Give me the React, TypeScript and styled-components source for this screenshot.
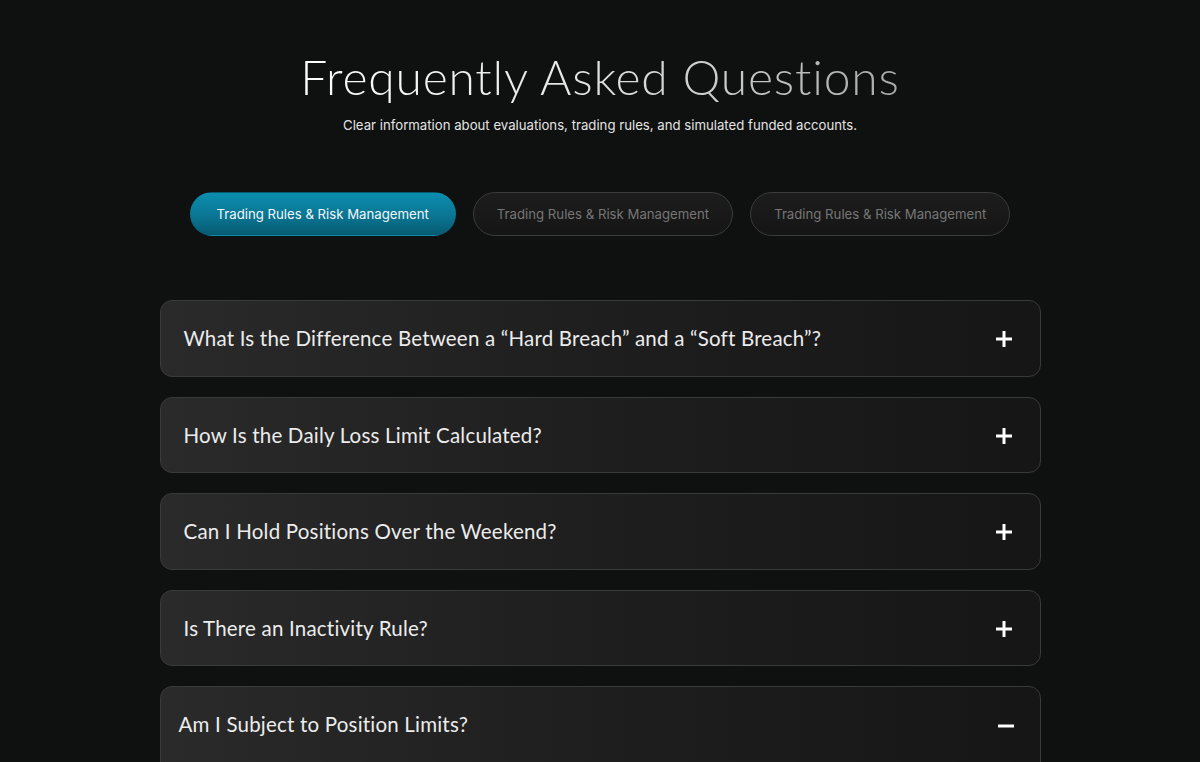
import React, { useState } from "react";
import styled, { createGlobalStyle } from "styled-components";

const GlobalStyle = createGlobalStyle`
  html, body {
    margin: 0;
    padding: 0;
    background: #0f1010;
  }
  body {
    font-family: Inter, "Liberation Sans", sans-serif;
    color: #fff;
    overflow: hidden;
  }
`;

const Page = styled.main`
  min-height: 762px;
  padding-top: 47px;
  box-sizing: border-box;
  display: flex;
  flex-direction: column;
  align-items: center;
`;

const Title = styled.h1`
  margin: 0;
  font-family: Lato, "DejaVu Sans", sans-serif;
  font-weight: 300;
  font-size: 48px;
  line-height: 60px;
  letter-spacing: 0.8px;
  background: linear-gradient(90deg, #ffffff 0%, #e6e6e6 45%, #a9a9a9 100%);
  -webkit-background-clip: text;
  background-clip: text;
  color: transparent;
`;

const Subtitle = styled.p`
  margin: 8px 0 0;
  font-size: 13.2px;
  line-height: 20px;
  color: #e4e4e4;
`;

const Tabs = styled.div`
  display: flex;
  gap: 17px;
  margin-top: 57px;
`;

const Tab = styled.button<{ $active?: boolean }>`
  height: 44px;
  padding: 0 ${(p) => (p.$active ? "26px" : "23px")};
  border-radius: 22px;
  font-family: Inter, "Liberation Sans", sans-serif;
  font-size: 13.2px;
  cursor: pointer;
  border: 1px solid ${(p) => (p.$active ? "transparent" : "#3b3b3b")};
  color: ${(p) => (p.$active ? "#f2f7f9" : "#767676")};
  background: ${(p) =>
    p.$active
      ? "linear-gradient(180deg, #0b8eae 0%, #0a7593 55%, #075a70 100%)"
      : "linear-gradient(180deg, #1d1d1d 0%, #151515 100%)"};
`;

const List = styled.div`
  width: 881px;
  margin-top: 64px;
  display: flex;
  flex-direction: column;
  gap: 20px;
`;

const Card = styled.div<{ $open?: boolean }>`
  border: 1px solid #3a3a3a;
  border-radius: 12px;
  background: linear-gradient(90deg, #2a2a2a 0%, #1e1e1e 50%, #161616 100%);
  padding: 0 24px 0 ${(p) => (p.$open ? "18px" : "23px")};
  box-sizing: border-box;
`;

const CardHeader = styled.div<{ $open?: boolean }>`
  height: ${(p) => (p.$open ? "74px" : "74.5px")};
  display: flex;
  align-items: center;
  justify-content: space-between;
  cursor: pointer;
`;

const Question = styled.span`
  font-family: Lato, "DejaVu Sans", sans-serif;
  font-size: 20.5px;
  color: #ececec;
  letter-spacing: 0.2px;
`;

const Answer = styled.p`
  margin: 0;
  padding: 2px 0 22px;
  font-size: 16px;
  line-height: 24px;
  color: #e2e2e2;
`;

const IconWrap = styled.span<{ $open?: boolean }>`
  display: inline-flex;
  width: 20px;
  height: 20px;
  margin-right: ${(p) => (p.$open ? "0" : "2px")};
  margin-top: ${(p) => (p.$open ? "4px" : "2px")};
`;

const Toggle = ({ open }: { open: boolean }) => (
  <IconWrap $open={open}>
    <svg width="20" height="20" viewBox="0 0 20 20">
      <line x1="2" y1="10" x2="18" y2="10" stroke="#fff" strokeWidth="3" />
      {!open && <line x1="10" y1="2" x2="10" y2="18" stroke="#fff" strokeWidth="3" />}
    </svg>
  </IconWrap>
);

const faqs = [
  {
    q: "What Is the Difference Between a \u201CHard Breach\u201D and a \u201CSoft Breach\u201D?",
    a: "A hard breach ends the account immediately, while a soft breach only closes the offending trades.",
  },
  {
    q: "How Is the Daily Loss Limit Calculated?",
    a: "The daily loss limit is based on the starting balance or equity of each trading day.",
  },
  {
    q: "Can I Hold Positions Over the Weekend?",
    a: "Weekend holding depends on the account type you have selected.",
  },
  {
    q: "Is There an Inactivity Rule?",
    a: "Accounts with no trading activity for 30 days may be closed.",
  },
  {
    q: "Am I Subject to Position Limits?",
    a: "The maximum position size depends on your available margin and account size.",
  },
];

const tabs = [
  "Trading Rules & Risk Management",
  "Trading Rules & Risk Management",
  "Trading Rules & Risk Management",
];

export default function App() {
  const [activeTab, setActiveTab] = useState(0);
  const [openIndex, setOpenIndex] = useState<number | null>(4);

  return (
    <>
      <GlobalStyle />
      <Page>
        <Title>Frequently Asked Questions</Title>
        <Subtitle>
          Clear information about evaluations, trading rules, and simulated funded accounts.
        </Subtitle>
        <Tabs>
          {tabs.map((t, i) => (
            <Tab key={i} $active={i === activeTab} onClick={() => setActiveTab(i)}>
              {t}
            </Tab>
          ))}
        </Tabs>
        <List>
          {faqs.map((f, i) => {
            const open = openIndex === i;
            return (
              <Card key={i} $open={open}>
                <CardHeader $open={open} onClick={() => setOpenIndex(open ? null : i)}>
                  <Question>{f.q}</Question>
                  <Toggle open={open} />
                </CardHeader>
                {open && <Answer>{f.a}</Answer>}
              </Card>
            );
          })}
        </List>
      </Page>
    </>
  );
}
